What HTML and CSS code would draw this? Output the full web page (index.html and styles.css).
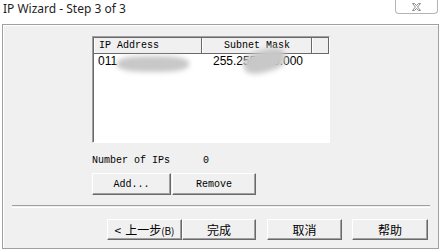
FILE: index.html
```html
<!DOCTYPE html>
<html lang="en">
<head>
    <meta charset="UTF-8">
    <title>IP Wizard - Step 3 of 3</title>
    <link rel="stylesheet" href="styles.css">
</head>
<body>

    <div class="titlebar">
        <span class="title">IP Wizard - Step 3 of 3</span>
        <span class="close-btn">
            <svg width="9" height="8" viewBox="0 0 9 8">
                <polygon points="0.5,0.5 2.5,0.5 4.5,2.6 6.5,0.5 8.5,0.5 5.6,4 8.5,7.5 6.5,7.5 4.5,5.4 2.5,7.5 0.5,7.5 3.4,4" fill="#fff" stroke="#8a8a8a" stroke-width="1" stroke-linejoin="round"/>
            </svg>
        </span>
    </div>

    <div class="frame">
        <div class="ip-list">
            <div class="list-head">
                <div class="head-cell head-ip">IP Address</div>
                <div class="head-cell head-mask">Subnet Mask</div>
                <div class="head-cell"></div>
            </div>
            <div class="list-row">
                <div class="cell">011</div>
                <div class="cell cell-mask">255.255.255.000</div>
            </div>
            <!-- blurred out by whoever took the screenshot -->
            <span class="smudge smudge-ip"></span>
            <span class="smudge smudge-mask"></span>
        </div>

        <div class="count-row">
            <span class="count-label">Number of IPs</span>
            <span class="count-value">0</span>
        </div>

        <div class="list-buttons">
            <button class="btn btn-add">Add...</button>
            <button class="btn btn-remove">Remove</button>
        </div>

        <div class="separator"></div>

        <div class="wizard-buttons">
            <button class="btn wiz-btn btn-back"><span class="lt">&lt;</span>上一步<small>(B)</small></button>
            <button class="btn wiz-btn btn-finish">完成</button>
            <button class="btn wiz-btn btn-cancel">取消</button>
            <button class="btn wiz-btn btn-help">帮助</button>
        </div>
    </div>

</body>
</html>
```

FILE: styles.css
```css
body {
    margin: 0;
    padding: 0;
    width: 441px;
    height: 251px;
    background-color: #fff;
    font-family: 'Liberation Mono', monospace;
    color: #000;
    overflow: hidden;
}

.titlebar {
    height: 24px;
    display: flex;
    justify-content: space-between;
    align-items: flex-start;
}

.title {
    font-family: 'Noto Sans', 'Liberation Sans', sans-serif;
    font-size: 12px;
    line-height: 17px;
    padding-left: 3px;
    color: #1e1e1e;
}

.close-btn {
    width: 43px;
    height: 14px;
    margin-right: 3px;
    border: 1px solid #b4b4b4;
    border-top: none;
    border-radius: 0 0 4px 4px;
    display: flex;
    justify-content: center;
    align-items: center;
    box-sizing: border-box;
    padding-top: 1px;
}

.frame {
    margin: 0 2px;
    height: 225px;
    box-sizing: border-box;
    background-color: #f0f0f0;
    border: 1px solid #a0a0a0;
    box-shadow: inset 1px 1px #fff;
    padding-top: 11px;
}

.ip-list {
    position: relative;
    margin-left: 89px;
    width: 238px;
    height: 107px;
    box-sizing: border-box;
    background-color: #fff;
    border: 1px solid;
    border-color: #a0a0a0 #fff #fff #a0a0a0;
    box-shadow: inset 1px 1px #696969;
    padding: 1px 0 0 1px;
    overflow: hidden;
}

.list-head {
    display: grid;
    grid-template-columns: 108px 110px 1fr;
    height: 16px;
    background-color: #f0f0f0;
    border-bottom: 1px solid #696969;
    box-sizing: border-box;
}

.head-cell {
    font-size: 10px;
    line-height: 15px;
    border-left: 1px solid #fff;
    border-right: 1px solid #696969;
    white-space: nowrap;
}

.head-ip {
    padding-left: 4px;
}

.head-mask {
    text-align: center;
}

.list-row {
    display: grid;
    grid-template-columns: 109px 110px;
    font-family: 'Liberation Sans', sans-serif;
    font-size: 12px;
    line-height: 14px;
}

.cell {
    padding-left: 4px;
    white-space: nowrap;
}

.cell-mask {
    padding-left: 0;
    text-align: center;
}

.smudge {
    position: absolute;
    background-color: #c8c8c8;
    border-radius: 40%;
    filter: blur(2.5px);
}

.smudge-ip {
    left: 24px;
    top: 19px;
    width: 72px;
    height: 16px;
}

.smudge-mask {
    left: 150px;
    top: 13px;
    width: 43px;
    height: 22px;
    transform: rotate(-15deg);
}

.count-row {
    margin: 12px 0 0 89px;
    height: 12px;
    display: flex;
    font-size: 10px;
    line-height: 12px;
}

.count-label {
    width: 111px;
}

.list-buttons {
    margin: 6px 0 0 89px;
    display: flex;
    gap: 1px;
}

.btn {
    background-color: #f0f0f0;
    border: 1px solid;
    border-color: #fff #696969 #696969 #fff;
    box-shadow: inset -1px -1px #a0a0a0;
    padding: 0;
    margin: 0;
    font-family: 'Liberation Mono', monospace;
    font-size: 10px;
    color: #000;
}

.btn-add {
    width: 79px;
    height: 22px;
}

.btn-remove {
    width: 84px;
    height: 22px;
}

.separator {
    margin: 10px 0 0 9px;
    width: 418px;
    height: 1px;
    border-top: 1px solid #a0a0a0;
    border-bottom: 1px solid #fff;
}

.wizard-buttons {
    margin: 11px 0 0 104px;
    display: flex;
}

.wiz-btn {
    height: 21px;
    font-family: 'Noto Sans CJK SC', 'Liberation Sans', sans-serif;
    font-size: 12px;
    line-height: 17px;
}

.wiz-btn .lt {
    margin-right: 4px;
}

.wiz-btn small {
    font-size: 10px;
}

.btn-back {
    width: 75px;
}

.btn-finish {
    width: 74px;
}

.btn-cancel {
    width: 75px;
    margin-left: 11px;
}

.btn-help {
    width: 76px;
    margin-left: 10px;
}
```
